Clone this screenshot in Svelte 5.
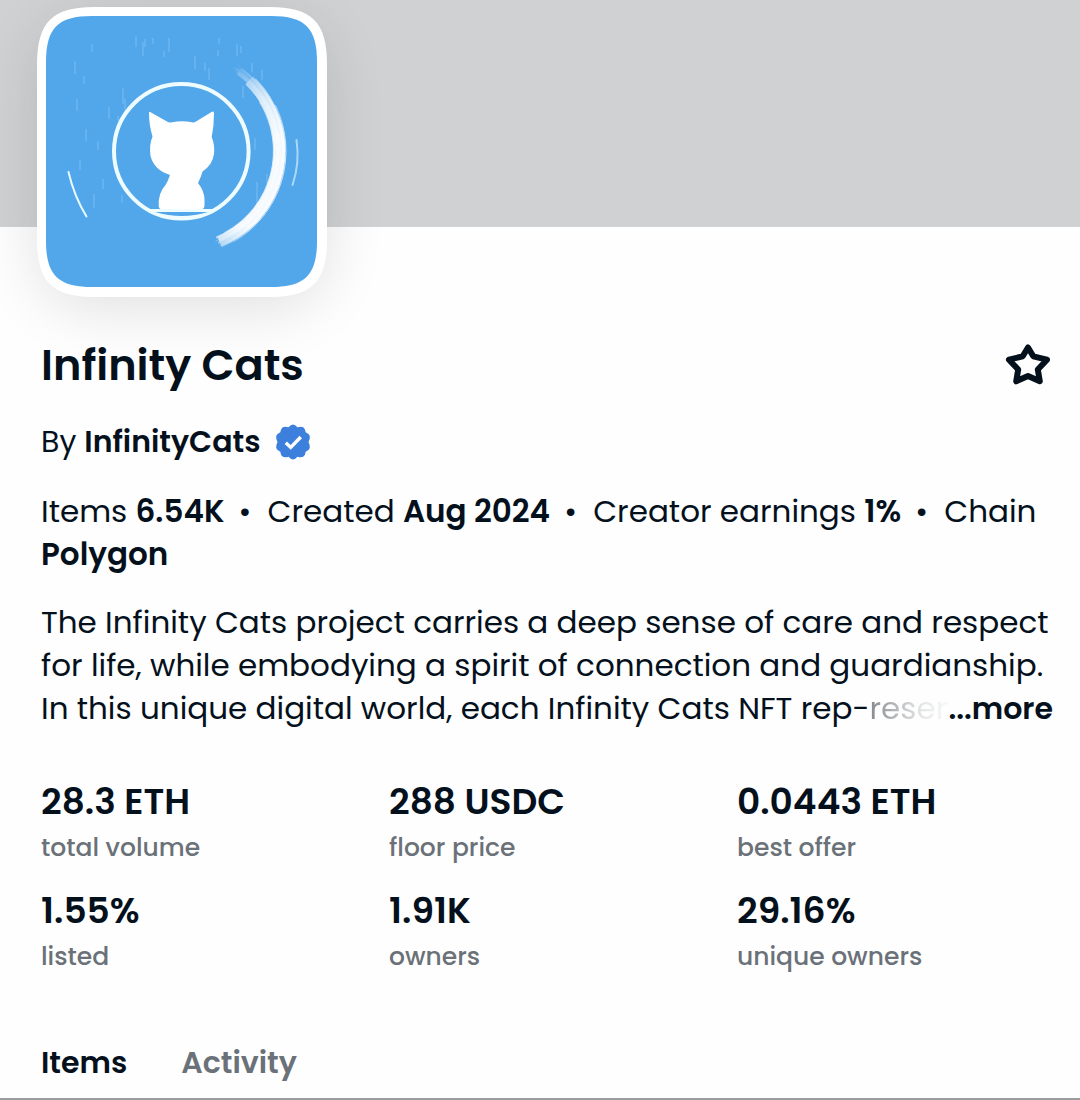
<script lang="ts">
  interface Stat { value: string; label: string; }

  const facts = [
    ['Items', '6.54K'],
    ['Created', 'Aug 2024'],
    ['Creator earnings', '1%'],
    ['Chain', 'Polygon'],
  ];

  const stats: Stat[] = [
    { value: '28.3 ETH', label: 'total volume' },
    { value: '288 USDC', label: 'floor price' },
    { value: '0.0443 ETH', label: 'best offer' },
    { value: '1.55%', label: 'listed' },
    { value: '1.91K', label: 'owners' },
    { value: '29.16%', label: 'unique owners' },
  ];

  let activeTab = $state('Items');
  let favorite = $state(false);

  // arc around the middle of the avatar, angles in degrees
  function arc(r: number, from: number, to: number) {
    const pt = (a: number) => {
      const rad = (a * Math.PI) / 180;
      return `${(135 + r * Math.cos(rad)).toFixed(1)} ${(135 + r * Math.sin(rad)).toFixed(1)}`;
    };
    return `M${pt(from)} A${r} ${r} 0 0 1 ${pt(to)}`;
  }

  // radius, start, end, width, opacity
  const bristles = [
    [98.5, -46, 67, 11, 0.8],
    [92.5, -32, 62, 1, 0.7], [93.5, -46, 68, 2, 0.8], [95.5, -54, 67, 2, 0.7], [97.5, -54, 67, 2, 0.8],
    [99.5, -56, 68, 2, 0.7], [101.5, -54, 67, 2, 0.8], [103.5, -44, 67, 2, 0.8], [105, -26, 60, 1, 0.7],
    [98.5, -58, 68, 1, 0.6], [102.5, -57, 68, 1, 0.6], [96.5, -56, 69, 1, 0.6],
  ];

  // x, y, length
  const rain = [
    [29, 45, 13], [38, 60, 8], [46, 28, 8], [31, 83, 12], [40, 113, 12], [52, 125, 9], [63, 91, 12],
    [72, 100, 5], [77, 72, 16], [79, 83, 14], [90, 20, 11], [97, 26, 14], [99, 23, 8], [107, 22, 6],
    [118, 35, 6], [123, 22, 14], [149, 40, 13], [159, 47, 8], [163, 52, 12], [172, 34, 6],
    [173, 22, 6], [191, 28, 12], [195, 30, 7], [197, 70, 12], [206, 47, 9], [216, 54, 10],
    [209, 122, 12], [34, 144, 10], [57, 163, 10], [48, 178, 14], [76, 179, 8], [211, 166, 26], [221, 158, 10],
  ];
</script>

<main class="collection">
  <div class="banner"></div>

  <div class="avatar">
    <svg viewBox="0 0 290 290" role="img" aria-label="Infinity Cats logo">
      <defs>
        <linearGradient id="brush" gradientUnits="userSpaceOnUse" x1="0" y1="48" x2="0" y2="232">
          <stop offset="0" stop-color="#fff" stop-opacity="0.1" />
          <stop offset="0.2" stop-color="#fff" stop-opacity="0.7" />
          <stop offset="0.4" stop-color="#fff" />
          <stop offset="0.88" stop-color="#fff" />
          <stop offset="1" stop-color="#fff" stop-opacity="0.3" />
        </linearGradient>
      </defs>
      <path
        fill="#fff"
        d="M0 58C0 15 15 0 58 0H232C275 0 290 15 290 58V232C290 275 275 290 232 290H58C15 290 0 275 0 232Z"
      />
      <g transform="translate(9 9)">
        <path
          fill="#52a6ea"
          d="M0 46C0 12 12 0 46 0H225C259 0 271 12 271 46V225C271 259 259 271 225 271H46C12 271 0 259 0 225Z"
        />
        {#each rain as [x, y, len]}
          <path class="rain" d="M{x} {y}v{len}" />
        {/each}
        <circle cx="135.300" cy="135.300" r="67.300" fill="none" stroke="#effcff" stroke-width="4" />
        <path
          fill="#fff"
          d="M103 97Q103 95 105 96.500L121 105.500Q123 107 126 106.300Q136 104.300 146 106.300Q148 107 150 105.500L165.500 96Q168 94.500 168 97.500Q168 110 165.700 121Q169 129 168 138Q166.500 149 156.500 155.500Q155 161 152 167Q158.500 175 158.500 184V190Q158 193 155 193.500H116Q113 193 112.700 190Q112 177 119.500 169Q122 165 124 159Q108 154 104.500 140Q103 129 106.500 120.500Q103 109 103 97Z"
        />
        <path fill="#effcff" d="M102 193H169L161 198Q136 210 109 198Z" />
        <path fill="#52a6ea" d="M109 196H162Q136 204 109 196Z" />
        {#each bristles as [r, from, to, width, opacity]}
          <path d={arc(r, from, to)} fill="none" stroke="url(#brush)" stroke-width={width} {opacity} />
        {/each}
        <path class="stroke" d="M22.500 156Q28 180 40.500 200.500" />
        <path class="stroke faint" d="M250.500 124Q254 147 246.500 169" />
      </g>
    </svg>
  </div>

  <section class="info">
    <header class="title-row">
      <h1>Infinity Cats</h1>
      <button class="star" aria-label="Favorite" aria-pressed={favorite} onclick={() => (favorite = !favorite)}>
        <svg viewBox="0 0 48 48" aria-hidden="true">
          <path
            d="M23 6.500L28.300 15.300L42 18.700L32.800 28.500L34.800 40.300L23 35L11.200 40.300L13.200 28.500L4 18.700L17.700 15.300Z"
            fill={favorite ? 'currentColor' : 'none'}
          />
        </svg>
      </button>
    </header>

    <p class="creator">
      <span>By <a href="#creator">InfinityCats</a></span>
      <svg class="verified" viewBox="0 0 36 36" role="img" aria-label="Verified">
        <path
          fill="#3d7fdd"
          d="M18 0.500Q20 0.500 22.500 3.300Q26.500 2 28.500 3.500Q30.300 5 30.700 8.300Q34.200 9.800 34.800 12Q35.200 14.500 33.500 18Q35.200 21.500 34.800 24Q34.200 26.200 30.700 27.700Q30.300 31 28.500 32.500Q26.500 34 22.500 32.700Q20 35.500 18 35.500Q16 35.500 13.500 32.700Q9.500 34 7.500 32.500Q5.700 31 5.300 27.700Q1.800 26.200 1.200 24Q0.800 21.500 2.500 18Q0.800 14.500 1.200 12Q1.800 9.800 5.300 8.300Q5.700 5 7.500 3.500Q9.500 2 13.500 3.300Q16 0.500 18 0.500Z"
        />
        <path d="M10.800 18.800L15.700 23.400L25.800 13" fill="none" stroke="#fff" stroke-width="3.400" />
      </svg>
    </p>

    <p class="facts">
      {#each facts as [name, value], i}
        {#if i > 0}<span class="dot">•</span>{/if}
        {name} <strong>{value}</strong>
      {/each}
    </p>

    <div class="description">
      <p>
        The Infinity Cats project carries a deep sense of care and respect
        for life, while embodying a spirit of connection and guardianship.
        In this unique digital world, each Infinity Cats NFT rep-<span class="fade">resen</span>
      </p>
      <button class="more">...more</button>
    </div>

    <dl class="stats">
      {#each stats as stat}
        <div class="stat">
          <dt>{stat.label}</dt>
          <dd>{stat.value}</dd>
        </div>
      {/each}
    </dl>
  </section>

  <nav class="tabs">
    {#each ['Items', 'Activity'] as tab}
      <button class="tab" class:active={activeTab === tab} onclick={() => (activeTab = tab)}>{tab}</button>
    {/each}
  </nav>
</main>

<style>
  :global(body) { margin: 0; background: #fefefe; }

  .collection {
    font-family: Poppins, Inter, sans-serif;
    font-size: 30px;
    line-height: 43px;
    color: #04111d;
  }
  button { padding: 0; border: none; background: none; font: inherit; color: inherit; cursor: pointer; }

  .banner { height: 227px; background: #d0d1d3; }

  .avatar {
    position: relative;
    width: 290px;
    height: 290px;
    margin: -220px 0 0 37px;
    border-radius: 56px;
    box-shadow: 0 12px 60px rgba(0, 0, 0, 0.12);
  }
  .avatar svg { display: block; width: 100%; height: 100%; }
  .rain { stroke: #9fd6fa; stroke-width: 1; opacity: 0.5; }
  .stroke { fill: none; stroke: #e6fbff; stroke-width: 2; stroke-linecap: round; }
  .stroke.faint { opacity: 0.6; }

  .info { padding: 40px 27px 0 41px; }

  .title-row { display: flex; justify-content: space-between; align-items: center; height: 56px; }
  h1 { margin: 0; font-size: 43px; line-height: 56px; font-weight: 600; }
  .star { width: 48px; height: 48px; }
  .star svg { display: block; width: 48px; height: 48px; }
  .star path { stroke: currentColor; stroke-width: 6; stroke-linejoin: round; }

  .creator { display: flex; align-items: center; gap: 14px; margin: 27px 0 0; }
  .creator a { font-weight: 600; color: inherit; text-decoration: none; }
  .verified { width: 36px; height: 36px; }

  .facts { margin: 27px 0 0; font-size: 31px; }
  .facts strong { font-weight: 600; }
  .dot { margin: 0 8px 0 14px; }

  .description { position: relative; height: 129px; margin-top: 25px; overflow: hidden; }
  .description p { margin: 0; font-size: 31px; }
  .fade {
    background: linear-gradient(to right, #85898d, #e4e5e6 60%, #fefefe);
    background-clip: text;
    color: transparent;
  }
  .more { position: absolute; right: 0; bottom: 0; background: #fefefe; font-weight: 600; }

  .stats { display: grid; grid-template-columns: repeat(3, 1fr); gap: 17px 32px; margin: 48px 0 0; }
  .stat { display: flex; flex-direction: column-reverse; }
  dt { font-size: 25px; line-height: 44px; font-weight: 500; color: #6a7178; }
  dd { margin: 0; font-size: 36px; line-height: 48px; font-weight: 600; }

  .tabs { display: flex; gap: 54px; padding: 62px 41px 14px; border-bottom: 2px solid #9a9c9f; }
  .tab { font-weight: 600; color: #6a7178; }
  .tab.active { color: #04111d; }
</style>
